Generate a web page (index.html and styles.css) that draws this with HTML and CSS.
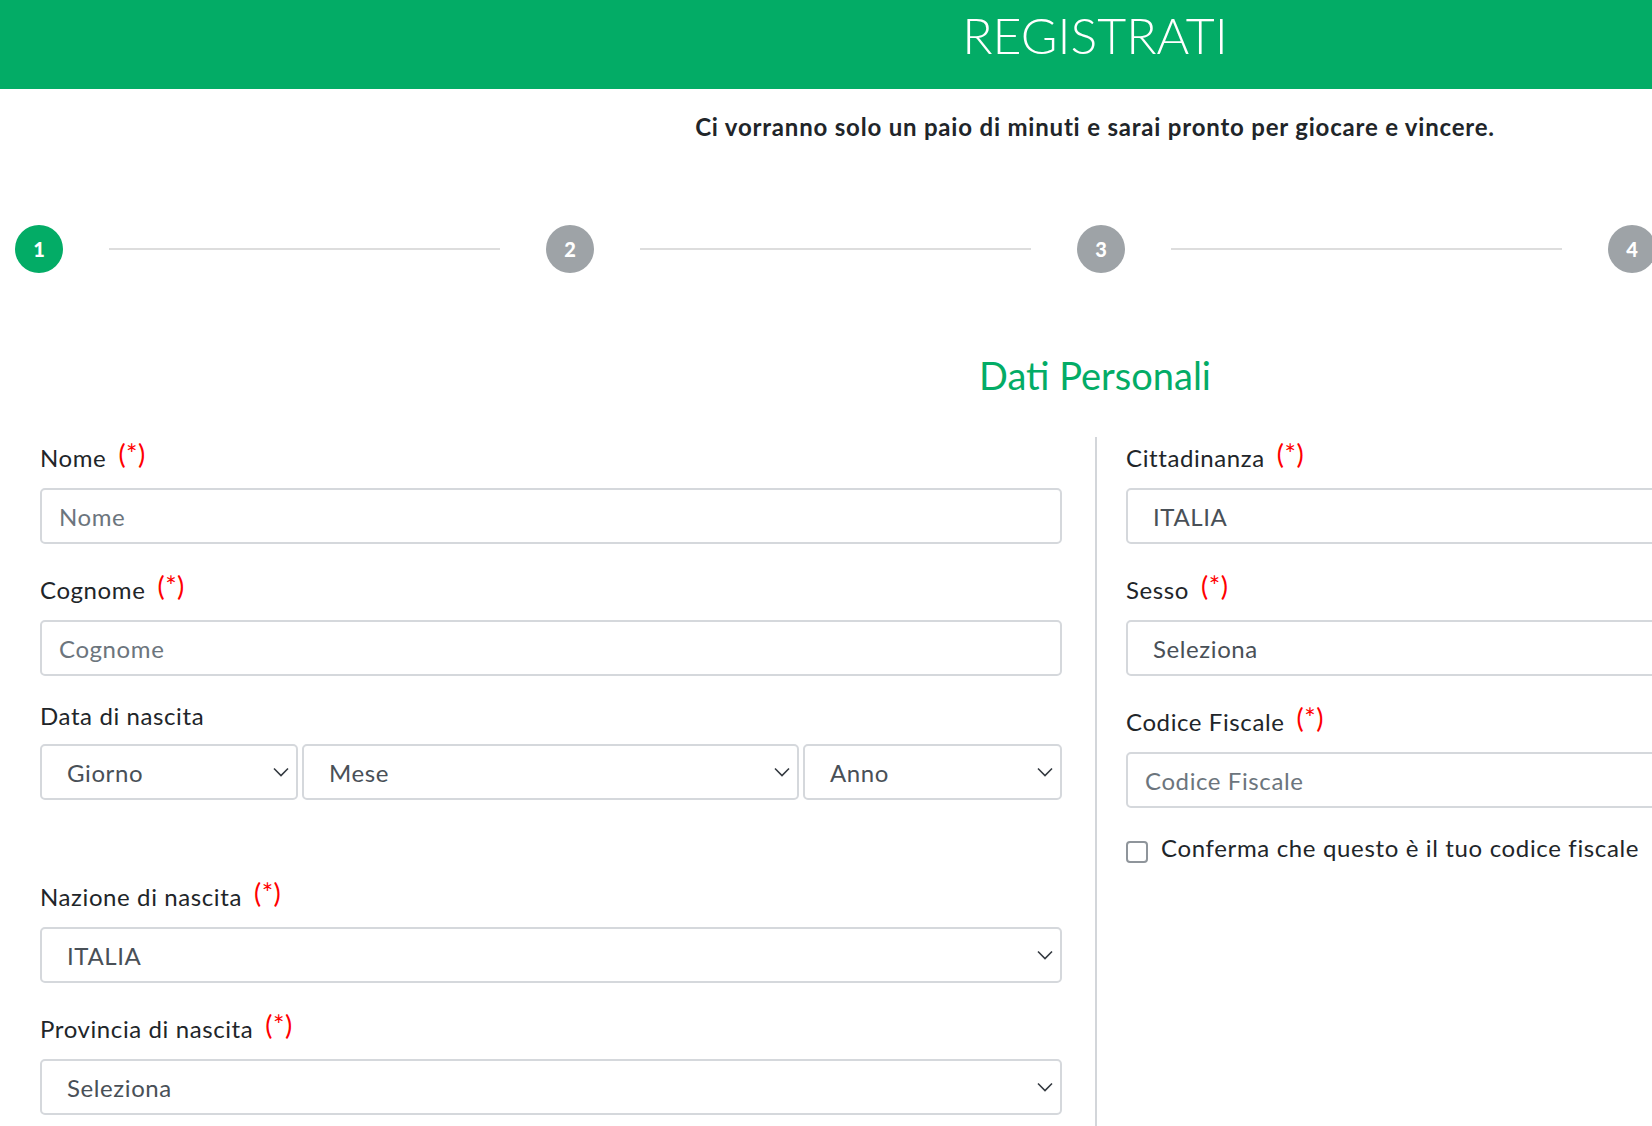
FILE: index.html
```html
<!DOCTYPE html>
<html lang="it">
<head>
<meta charset="utf-8">
<title>Registrati</title>
<link rel="stylesheet" href="styles.css">
</head>
<body>
<div class="viewport">
  <div class="page">
    <header class="hero"><h1 class="hero-title">REGISTRATI</h1></header>
    <p class="lead">Ci vorranno solo un paio di minuti e sarai pronto per giocare e vincere.</p>

    <ol class="stepper">
      <li class="step step-active">1</li>
      <li class="step-line"></li>
      <li class="step">2</li>
      <li class="step-line"></li>
      <li class="step">3</li>
      <li class="step-line"></li>
      <li class="step">4</li>
      <li class="step-line"></li>
    </ol>

    <h2 class="section-title">Dati Personali</h2>

    <div class="form-row">
      <div class="col col-left">
        <div class="field">
          <label class="label label-req">Nome<span class="req-mark">(*)</span></label>
          <input class="control input" type="text" placeholder="Nome">
        </div>
        <div class="field">
          <label class="label label-req">Cognome<span class="req-mark">(*)</span></label>
          <input class="control input" type="text" placeholder="Cognome">
        </div>
        <div class="field field-date">
          <label class="label">Data di nascita</label>
          <div class="date-row">
            <div class="control select"><span>Giorno</span><svg class="chev" width="16" height="10" viewBox="0 0 16 10"><path d="M1 1.5 L8 8.5 L15 1.5" fill="none" stroke="#343a40" stroke-width="1.6"/></svg></div>
            <div class="control select"><span>Mese</span><svg class="chev" width="16" height="10" viewBox="0 0 16 10"><path d="M1 1.5 L8 8.5 L15 1.5" fill="none" stroke="#343a40" stroke-width="1.6"/></svg></div>
            <div class="control select"><span>Anno</span><svg class="chev" width="16" height="10" viewBox="0 0 16 10"><path d="M1 1.5 L8 8.5 L15 1.5" fill="none" stroke="#343a40" stroke-width="1.6"/></svg></div>
          </div>
        </div>
        <div class="field">
          <label class="label label-req">Nazione di nascita<span class="req-mark">(*)</span></label>
          <div class="control select"><span>ITALIA</span><svg class="chev" width="16" height="10" viewBox="0 0 16 10"><path d="M1 1.5 L8 8.5 L15 1.5" fill="none" stroke="#343a40" stroke-width="1.6"/></svg></div>
        </div>
        <div class="field">
          <label class="label label-req">Provincia di nascita<span class="req-mark">(*)</span></label>
          <div class="control select"><span>Seleziona</span><svg class="chev" width="16" height="10" viewBox="0 0 16 10"><path d="M1 1.5 L8 8.5 L15 1.5" fill="none" stroke="#343a40" stroke-width="1.6"/></svg></div>
        </div>
      </div>

      <div class="col col-right">
        <div class="field">
          <label class="label label-req">Cittadinanza<span class="req-mark">(*)</span></label>
          <div class="control select"><span>ITALIA</span><svg class="chev" width="16" height="10" viewBox="0 0 16 10"><path d="M1 1.5 L8 8.5 L15 1.5" fill="none" stroke="#343a40" stroke-width="1.6"/></svg></div>
        </div>
        <div class="field">
          <label class="label label-req">Sesso<span class="req-mark">(*)</span></label>
          <div class="control select"><span>Seleziona</span><svg class="chev" width="16" height="10" viewBox="0 0 16 10"><path d="M1 1.5 L8 8.5 L15 1.5" fill="none" stroke="#343a40" stroke-width="1.6"/></svg></div>
        </div>
        <div class="field">
          <label class="label label-req">Codice Fiscale<span class="req-mark">(*)</span></label>
          <input class="control input" type="text" placeholder="Codice Fiscale">
        </div>
        <label class="check">
          <input class="checkbox" type="checkbox">
          <span>Conferma che questo è il tuo codice fiscale</span>
        </label>
      </div>
    </div>
  </div>
</div>
</body>
</html>
```
FILE: styles.css
```css
html, body {
  margin: 0;
  padding: 0;
  overflow: hidden;
  background: #ffffff;
}

body {
  font-family: "Lato", "Open Sans", "Liberation Sans", sans-serif;
  color: #212529;
}

.viewport {
  width: 100%;
  overflow: hidden;
}

.page {
  width: 2190px;
}

/* Header */
.hero {
  background: #03ac66;
  height: 89px;
  box-sizing: border-box;
  padding-top: 5px;
  text-align: center;
}

.hero-title {
  margin: 0;
  font-weight: 300;
  font-size: 50px;
  line-height: 60px;
  color: #ffffff;
}

.lead {
  margin: 23px 0 0;
  text-align: center;
  font-weight: 700;
  font-size: 24px;
  line-height: 29px;
  letter-spacing: 0.8px;
  color: #212529;
}

/* Stepper */
.stepper {
  list-style: none;
  margin: 84px 0 0;
  padding: 0 0 0 15px;
  display: flex;
  align-items: center;
}

.step {
  flex: none;
  width: 48px;
  height: 48px;
  border-radius: 50%;
  background: #9ea3a7;
  color: #ffffff;
  font-weight: 900;
  font-size: 20px;
  display: flex;
  align-items: center;
  justify-content: center;
}

.step-active {
  background: #03ac66;
}

.step-line {
  flex: none;
  width: 391px;
  height: 2px;
  margin: 0 46px;
  background: #dddddd;
}

/* Section title */
.section-title {
  margin: 79px 0 0;
  text-align: center;
  font-weight: 400;
  font-size: 38px;
  line-height: 46px;
  color: #03ac66;
}

/* Form */
.form-row {
  display: flex;
  margin-top: 39px;
  padding-bottom: 40px;
}

.col {
  flex: none;
  width: 1095px;
  box-sizing: border-box;
}

.col-left {
  padding: 0 33px 0 40px;
}

.col-right {
  border-left: 2px solid #d3d6da;
  padding: 0 40px 0 29px;
}

.field {
  margin-bottom: 25px;
}

.field-date {
  margin-bottom: 76px;
}

.label {
  display: block;
  font-size: 24px;
  line-height: 29px;
  letter-spacing: 0.6px;
  color: #212529;
  margin-bottom: 14px;
}

.label-req {
  padding-top: 6px;
  margin-bottom: 16px;
}

.req-mark {
  color: #ff0000;
  margin-left: 12px;
  font-size: 27px;
  vertical-align: 3px;
  line-height: 0;
  letter-spacing: 0.5px;
}

.control {
  display: flex;
  align-items: center;
  width: 100%;
  height: 56px;
  box-sizing: border-box;
  border: 2px solid #d5d8dc;
  border-radius: 5px;
  background: #ffffff;
  font-family: "Lato", "Open Sans", "Liberation Sans", sans-serif;
  font-size: 24px;
  letter-spacing: 0.6px;
  color: #495057;
}

.input {
  padding: 0 17px;
  outline: none;
}

.input::placeholder {
  color: #6c757d;
  opacity: 1;
}

.select {
  justify-content: space-between;
  padding: 0 7px 0 25px;
}

.chev {
  flex: none;
}

.date-row {
  display: grid;
  grid-template-columns: 258px 497px 1fr;
  gap: 4px;
}

.check {
  display: flex;
  align-items: flex-start;
  gap: 13px;
  font-size: 24px;
  line-height: 29px;
  letter-spacing: 0.65px;
  color: #212529;
}

.checkbox {
  -webkit-appearance: none;
  appearance: none;
  flex: none;
  margin: 8px 0 0;
  width: 22px;
  height: 22px;
  box-sizing: border-box;
  border: 2px solid #8f959b;
  border-radius: 4px;
  background: #ffffff;
}
```
